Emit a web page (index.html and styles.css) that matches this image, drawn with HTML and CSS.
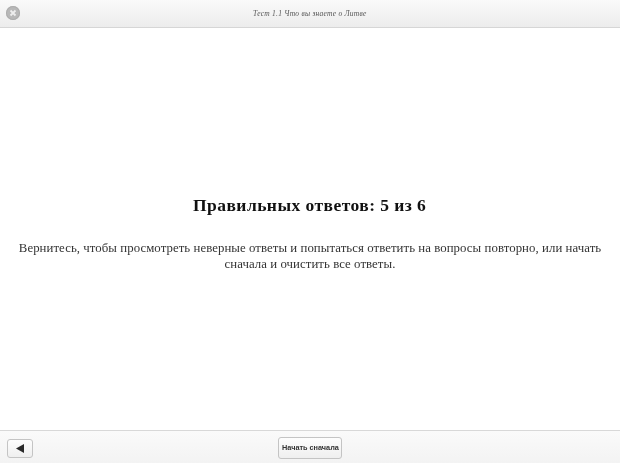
FILE: index.html
```html
<!DOCTYPE html>
<html lang="ru">
<head>
<meta charset="utf-8">
<title>Тест 1.1</title>
<link rel="stylesheet" href="styles.css">
</head>
<body>
<div class="app">
  <header class="topbar">
    <button class="close" aria-label="Закрыть">
      <svg width="8" height="8" viewBox="0 0 8 8"><path d="M1.5 1.5L6.5 6.5M6.5 1.5L1.5 6.5" stroke="#eeeeee" stroke-width="1.8" fill="none"/></svg>
    </button>
    <div class="title">Тест 1.1 Что вы знаете о Литве</div>
  </header>
  <main class="content">
    <h1 class="score">Правильных ответов: 5 из 6</h1>
    <p class="message">Вернитесь, чтобы просмотреть неверные ответы и попытаться ответить на вопросы повторно, или начать сначала и очистить все ответы.</p>
  </main>
  <footer class="bottombar">
    <button class="btn back" aria-label="Назад">
      <svg width="8" height="9" viewBox="0 0 8 9"><path d="M8 0V9L0 4.5Z" fill="#2a2a2a"/></svg>
    </button>
    <button class="btn restart"><span class="restart-label">Начать сначала</span></button>
  </footer>
  <div class="strip"></div>
</div>
</body>
</html>
```
FILE: styles.css
```css
* { box-sizing: border-box; }
html, body { margin: 0; height: 100%; background: #fff; }
.app { width: 620px; height: 465px; display: flex; flex-direction: column; overflow: hidden; }
.topbar {
  height: 28px; flex: none; display: flex; align-items: center; justify-content: center;
  position: relative;
  background: linear-gradient(#fafafa, #ececec);
  border-bottom: 1px solid #d6d6d6;
}
.close {
  position: absolute; left: 6px; top: 6px; width: 14px; height: 14px; padding: 0; border: 0;
  border-radius: 50%; background: #b8b8b8; box-shadow: inset 0 0 0 1px #adadad;
  display: flex; align-items: center; justify-content: center;
}
.title { font: italic 7.5px "Liberation Serif", serif; letter-spacing: 0.25px; color: #555; will-change: transform; }
.content { flex: 1; display: flex; flex-direction: column; align-items: center; padding: 166px 8px 0; text-align: center; }
.score { margin: 0; font: bold 17.5px/22px "Liberation Serif", serif; letter-spacing: 0.45px; color: #111; will-change: transform; }
.message { margin: 24px 0 0; font: 12.8px/16px "Liberation Serif", serif; letter-spacing: 0.065px; color: #333; width: 604px; will-change: transform; }
.bottombar {
  height: 33px; flex: none; position: relative; display: flex; align-items: center; justify-content: center;
  background: linear-gradient(#fafafa, #f3f3f3);
  border-top: 1px solid #d8d8d8;
}
.btn {
  border: 1px solid #c4c4c4; border-radius: 3px; background: linear-gradient(#fdfdfd, #efefef);
  padding: 0; display: flex; align-items: center; justify-content: center;
}
.back { position: absolute; left: 7px; top: 8px; width: 26px; height: 19px; }
.restart { width: 64px; height: 22px; margin-top: 1px; }
.restart-label { font: bold 7.3px "Liberation Sans", sans-serif; color: #333; will-change: transform; }
.strip { height: 2px; flex: none; background: #fff; }
```
